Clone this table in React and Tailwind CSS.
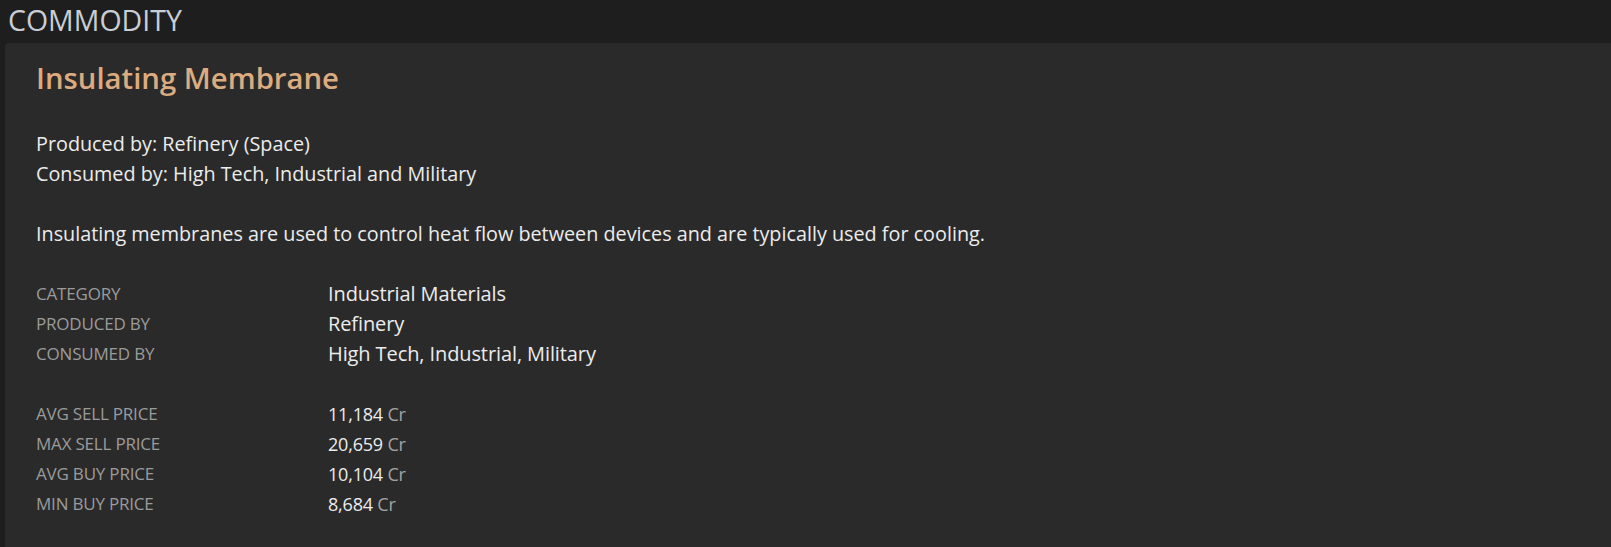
import React from "react";

const info = [
  ["CATEGORY", "Industrial Materials"],
  ["PRODUCED BY", "Refinery"],
  ["CONSUMED BY", "High Tech, Industrial, Military"],
];

const prices = [
  ["AVG SELL PRICE", "11,184"],
  ["MAX SELL PRICE", "20,659"],
  ["AVG BUY PRICE", "10,104"],
  ["MIN BUY PRICE", "8,684"],
];

function Row({ label, children, small }) {
  return (
    <div className="flex h-[30px] items-center">
      <div className="w-[292px] shrink-0 text-[17px] tracking-[-0.2px] text-[#9b9b9b]">{label}</div>
      <div className={small ? "text-[18px] tracking-[-0.2px] text-[#ececec]" : "text-[20px] tracking-[-0.1px] text-[#ececec]"}>
        {children}
      </div>
    </div>
  );
}

export default function App() {
  return (
    <div className="flex h-screen flex-col overflow-hidden bg-[#1e1e1e] font-['Open_Sans',sans-serif]">
      {/* header */}
      <div className="flex h-[43px] shrink-0 items-center pb-[3px] pl-[8px]">
        <h1 className="text-[28.5px] leading-none text-[#c9ced5]">COMMODITY</h1>
      </div>

      {/* panel */}
      <div className="ml-[5px] flex-1 rounded-tl-[4px] bg-[#2a2a2a] px-[31px] pt-[15px]">
        <h2 className="mb-[31px] h-[40px] text-[29.3px] font-semibold leading-[40px] text-[#dcab7f]">
          Insulating Membrane
        </h2>

        <div className="text-[19.8px] leading-[30px] text-[#ececec]">
          <p>Produced by: Refinery (Space)</p>
          <p className="mb-[30px]">Consumed by: High Tech, Industrial and Military</p>
          <p className="mb-[30px]">
            Insulating membranes are used to control heat flow between devices and are typically used for cooling.
          </p>
        </div>

        <div className="mb-[30px]">
          {info.map(([k, v]) => (
            <Row key={k} label={k}>
              {v}
            </Row>
          ))}
        </div>

        <div>
          {prices.map(([k, v]) => (
            <Row key={k} label={k} small>
              {v} <span className="text-[#a3a3a3]">Cr</span>
            </Row>
          ))}
        </div>
      </div>
    </div>
  );
}
